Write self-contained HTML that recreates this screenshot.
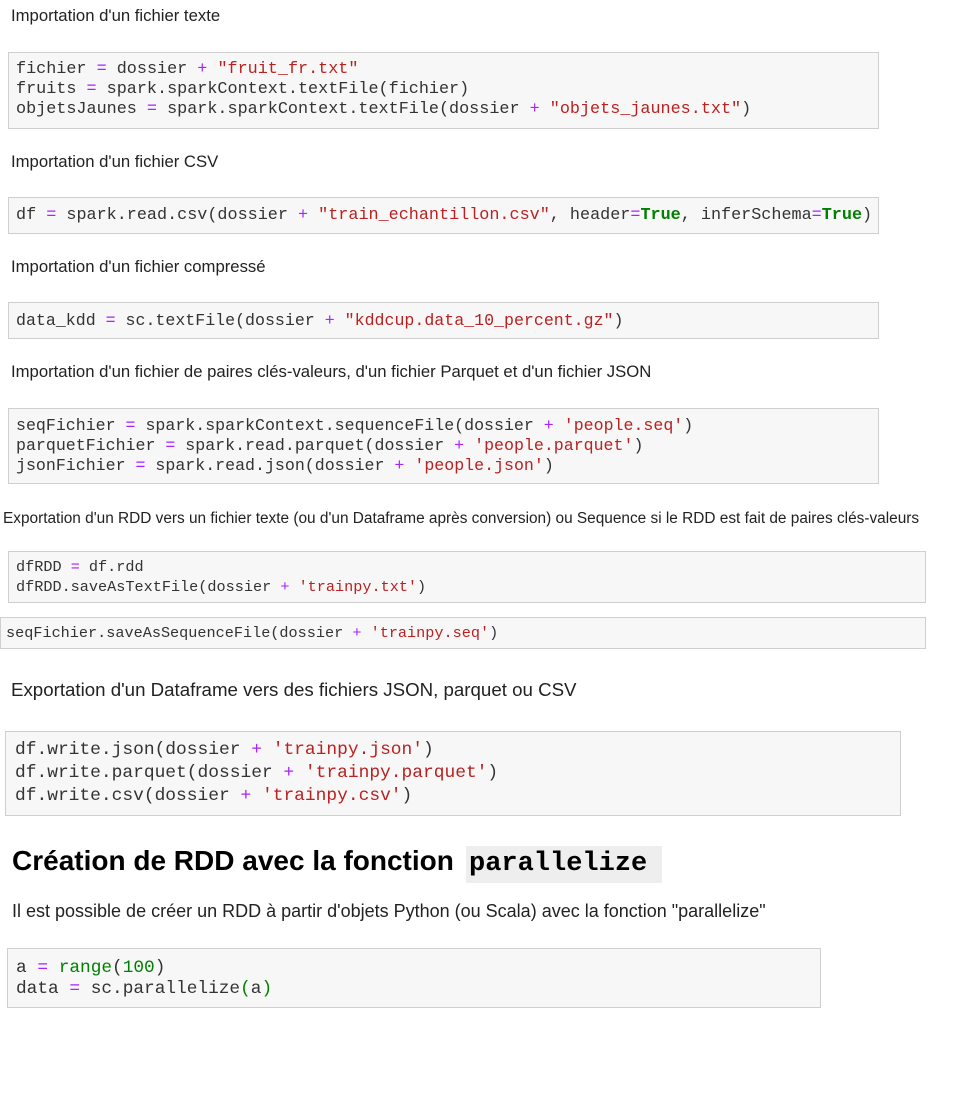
<!DOCTYPE html>
<html><head><meta charset="utf-8"><style>
body{margin:0;width:958px;height:1119px;background:#fff;position:relative;overflow:hidden;font-family:"Liberation Sans",Arial,sans-serif;color:#222}
.t{position:absolute;white-space:nowrap;line-height:1}
.b{position:absolute;background:#f7f7f7;border:1px solid #cfcfcf;box-sizing:border-box}
.c{position:absolute;white-space:pre;font-family:"Liberation Mono","Courier New",monospace;color:#333;line-height:20px}
.o{color:#a2f}.s{color:#ba2121}.k{color:#008000;font-weight:bold}.g{color:#008000}
</style></head><body>
<div class="t" style="left:11px;top:8px;font-size:16.7px">Importation d'un fichier texte</div>
<div class="b" style="left:8px;top:52px;width:871px;height:77px"></div>
<div class="c" style="left:16px;top:60px;font-size:16.8px">fichier <span class="o">=</span> dossier <span class="o">+</span> <span class="s">"fruit_fr.txt"</span>
fruits <span class="o">=</span> spark.sparkContext.textFile(fichier)
objetsJaunes <span class="o">=</span> spark.sparkContext.textFile(dossier <span class="o">+</span> <span class="s">"objets_jaunes.txt"</span>)</div>

<div class="t" style="left:11px;top:154px;font-size:16.7px">Importation d'un fichier CSV</div>
<div class="b" style="left:8px;top:197px;width:871px;height:37px"></div>
<div class="c" style="left:16px;top:206px;font-size:16.8px">df <span class="o">=</span> spark.read.csv(dossier <span class="o">+</span> <span class="s">"train_echantillon.csv"</span>, header<span class="o">=</span><span class="k">True</span>, inferSchema<span class="o">=</span><span class="k">True</span>)</div>

<div class="t" style="left:11px;top:259px;font-size:16.7px">Importation d'un fichier compressé</div>
<div class="b" style="left:8px;top:302px;width:871px;height:37px"></div>
<div class="c" style="left:16px;top:311px;font-size:16.6px">data_kdd <span class="o">=</span> sc.textFile(dossier <span class="o">+</span> <span class="s">"kddcup.data_10_percent.gz"</span>)</div>

<div class="t" style="left:11px;top:364px;font-size:16.7px">Importation d'un fichier de paires clés-valeurs, d'un fichier Parquet et d'un fichier JSON</div>
<div class="b" style="left:8px;top:408px;width:871px;height:76px"></div>
<div class="c" style="left:16px;top:416px;font-size:16.6px">seqFichier <span class="o">=</span> spark.sparkContext.sequenceFile(dossier <span class="o">+</span> <span class="s">'people.seq'</span>)
parquetFichier <span class="o">=</span> spark.read.parquet(dossier <span class="o">+</span> <span class="s">'people.parquet'</span>)
jsonFichier <span class="o">=</span> spark.read.json(dossier <span class="o">+</span> <span class="s">'people.json'</span>)</div>

<div class="t" style="left:3px;top:511px;font-size:15.4px">Exportation d'un RDD vers un fichier texte (ou d'un Dataframe après conversion) ou Sequence si le RDD est fait de paires clés-valeurs</div>
<div class="b" style="left:8px;top:551px;width:918px;height:52px"></div>
<div class="c" style="left:16px;top:557px;font-size:15.2px">dfRDD <span class="o">=</span> df.rdd
dfRDD.saveAsTextFile(dossier <span class="o">+</span> <span class="s">'trainpy.txt'</span>)</div>
<div class="b" style="left:0;top:617px;width:926px;height:32px"></div>
<div class="c" style="left:6px;top:623px;font-size:15.2px">seqFichier.saveAsSequenceFile(dossier <span class="o">+</span> <span class="s">'trainpy.seq'</span>)</div>

<div class="t" style="left:11px;top:681px;font-size:18.7px">Exportation d'un Dataframe vers des fichiers JSON, parquet ou CSV</div>
<div class="b" style="left:5px;top:731px;width:896px;height:85px"></div>
<div class="c" style="left:15px;top:739px;font-size:17.9px;line-height:23px">df.write.json(dossier <span class="o">+</span> <span class="s">'trainpy.json'</span>)
df.write.parquet(dossier <span class="o">+</span> <span class="s">'trainpy.parquet'</span>)
df.write.csv(dossier <span class="o">+</span> <span class="s">'trainpy.csv'</span>)</div>

<div class="t" style="left:12px;top:847px;font-size:28px;font-weight:bold;color:#000">Création de RDD avec la fonction</div>
<div style="position:absolute;left:466px;top:846px;width:196px;height:37px;background:#eee"></div>
<div class="t" style="left:469px;top:851px;font-size:27px;font-weight:bold;font-family:'Liberation Mono',monospace;color:#000">parallelize</div>

<div class="t" style="left:12px;top:902px;font-size:18px">Il est possible de créer un RDD à partir d'objets Python (ou Scala) avec la fonction "parallelize"</div>
<div class="b" style="left:7px;top:948px;width:814px;height:60px"></div>
<div class="c" style="left:16px;top:958px;font-size:17.8px;line-height:21px">a <span class="o">=</span> <span class="g">range</span>(<span class="g">100</span>)
data <span class="o">=</span> sc.parallelize<span class="g">(</span>a<span class="g">)</span></div>
</body></html>
